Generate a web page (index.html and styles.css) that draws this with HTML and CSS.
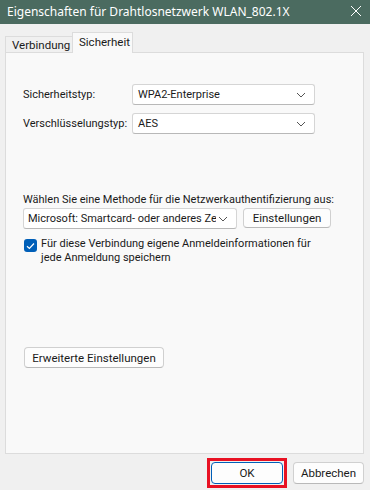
FILE: index.html
```html
<!DOCTYPE html>
<html lang="de">
<head>
<meta charset="utf-8">
<link rel="stylesheet" href="styles.css">
</head>
<body>
<div class="window">
  <div class="titlebar">
    <span class="title">Eigenschaften für Drahtlosnetzwerk WLAN_802.1X</span>
    <svg class="close" width="12" height="12" viewBox="0 0 12 12"><path d="M1 1 L11 11 M11 1 L1 11" stroke="#fff" stroke-width="1" fill="none"/></svg>
  </div>
  <div class="tabs">
    <div class="tab">Verbindung</div>
    <div class="tab active">Sicherheit</div>
  </div>
  <div class="panel">
    <div class="row first">
      <span class="label">Sicherheitstyp:</span>
      <div class="select wide"><span>WPA2-Enterprise</span><svg class="chev" width="10" height="6" viewBox="0 0 10 6"><path d="M1 1 L5 5 L9 1" stroke="#555" fill="none"/></svg></div>
    </div>
    <div class="row second">
      <span class="label">Verschlüsselungstyp:</span>
      <div class="select wide"><span>AES</span><svg class="chev" width="10" height="6" viewBox="0 0 10 6"><path d="M1 1 L5 5 L9 1" stroke="#555" fill="none"/></svg></div>
    </div>
    <div class="method-label">Wählen Sie eine Methode für die Netzwerkauthentifizierung aus:</div>
    <div class="method-row">
      <div class="select method"><span class="clip">Microsoft: Smartcard- oder anderes Zertifikat</span><svg class="chev" width="10" height="6" viewBox="0 0 10 6"><path d="M1 1 L5 5 L9 1" stroke="#555" fill="none"/></svg></div>
      <button class="btn settings">Einstellungen</button>
    </div>
    <div class="check-row">
      <span class="checkbox"><svg width="9" height="8" viewBox="0 0 9 8"><path d="M1 4.2 L3.4 6.5 L8 1.5" stroke="#fff" stroke-width="1.2" fill="none"/></svg></span>
      <span class="check-text">Für diese Verbindung eigene Anmeldeinformationen für<br>jede Anmeldung speichern</span>
    </div>
    <button class="btn advanced">Erweiterte Einstellungen</button>
  </div>
  <div class="footer">
    <div class="highlight"><button class="btn ok">OK</button></div>
    <button class="btn cancel">Abbrechen</button>
  </div>
</div>
</body>
</html>
```
FILE: styles.css
```css
* { box-sizing: border-box; }
html, body { margin: 0; padding: 0; }
body {
  background: #f0f0f0;
  font-family: Roboto, "Noto Sans", sans-serif;
  font-size: 11px;
  color: #1a1a1a;
  width: 370px;
  height: 490px;
  overflow: hidden;
}
.titlebar {
  height: 24px;
  background: #4b6b60;
  color: #fff;
  display: flex;
  align-items: center;
  justify-content: space-between;
  padding: 0 8px 0 7px;
}
.title { font-family: "Noto Sans", sans-serif; font-size: 12px; line-height: 24px; }
.close { margin-top: -2px; }
.tabs {
  display: flex;
  align-items: flex-end;
  height: 28px;
  padding-left: 5px;
}
.tab {
  height: 16px;
  line-height: 16px;
  padding: 0 0 0 6px;
  border: 1px solid #dcdcdc;
  border-bottom: none;
  border-right: none;
  background: #f0f0f0;
  width: 67px;
  white-space: nowrap;
  font-size: 11.5px;
}
.tab.active {
  height: 21px;
  line-height: 19px;
  background: #f9f9f9;
  width: 61px;
  margin-bottom: -1px;
  padding-left: 6px;
  border-right: 1px solid #dcdcdc;
  position: relative;
  z-index: 1;
}
.panel {
  margin-left: 5px;
  width: 359px;
  height: 402px;
  background: #f9f9f9;
  border: 1px solid #dcdcdc;
  padding: 0 0 0 17px;
}
.row {
  display: flex;
  align-items: center;
  height: 21px;
}
.row.first { margin-top: 31px; }
.row.second { margin-top: 8px; }
.label { width: 109px; white-space: nowrap; }
.select {
  height: 21px;
  background: #fff;
  border: 1px solid #d5d5d5;
  border-bottom-color: #b8b8b8;
  border-radius: 3px;
  display: flex;
  align-items: center;
  justify-content: space-between;
  padding: 0 8px 0 5px;
}
.select.wide { width: 183px; }
.method-label { margin-top: 59px; line-height: 14px; white-space: nowrap; }
.method-row {
  display: flex;
  margin-top: 1px;
  gap: 6px;
}
.select.method { width: 214px; padding-left: 4px; }
.clip { overflow: hidden; white-space: nowrap; width: 188px; }
.btn {
  font-family: inherit;
  font-size: 11.5px;
  color: #1a1a1a;
  background: #fdfdfd;
  border: 1px solid #d0d0d0;
  border-bottom-color: #b9b9b9;
  border-radius: 4px;
  height: 21px;
  padding: 0;
}
.settings { width: 88px; height: 20px; }
.check-row {
  display: flex;
  margin-top: 8px;
  margin-left: 1px;
}
.checkbox {
  width: 13px;
  height: 13px;
  flex: none;
  background: #005fb8;
  border-radius: 3px;
  display: flex;
  align-items: center;
  justify-content: center;
  margin-top: 2px;
}
.check-text { margin-left: 4px; line-height: 14px; white-space: nowrap; }
.advanced { width: 140px; margin-top: 82px; display: block; margin-left: 1px; }
.footer {
  display: flex;
  justify-content: flex-end;
  align-items: center;
  padding-right: 6px;
  margin-top: 4px;
  gap: 6px;
}
.highlight {
  border: 3px solid #e81123;
  padding: 1px;
  width: 80px;
  height: 30px;
}
.ok { width: 72px; height: 22px; border: 1px solid #005fb8; display: block; }
.cancel { width: 71px; height: 22px; }
```
